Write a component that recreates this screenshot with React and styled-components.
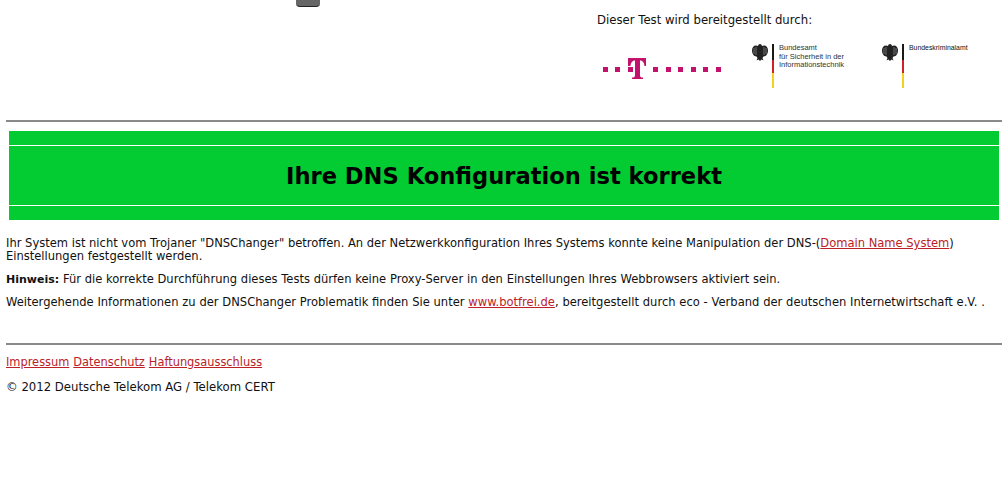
import React from 'react';
import styled, { createGlobalStyle } from 'styled-components';

const GlobalStyle = createGlobalStyle`
  html, body {
    margin: 0;
    padding: 0;
    background: #fff;
  }
  body {
    font-family: "DejaVu Sans", Verdana, sans-serif;
    font-size: 11.7px;
    line-height: 13px;
    color: #111;
  }
`;

const Page = styled.div`
  position: relative;
  padding: 14px 6px 0;
  height: 490px;
`;

const DragHandle = styled.div`
  position: absolute;
  top: 0;
  left: 296px;
  width: 24px;
  height: 6px;
  background: #666;
  border-bottom: 1px solid #222;
  border-radius: 0 0 4px 4px;
`;

const Header = styled.header`
  display: flex;
  justify-content: flex-end;
  height: 106px;
`;

const Sponsors = styled.div`
  width: 405px;
`;

const SponsorTitle = styled.div`
  margin-bottom: 17px;
`;

const LogoRow = styled.div`
  display: flex;
  align-items: flex-start;
`;

const TelekomLogo = styled.svg`
  display: block;
  flex: none;
  width: 125px;
  height: 35px;
  margin: 11px 25px 0 5px;
`;

const AgencyLogo = styled.div`
  display: flex;
  align-items: flex-start;
  flex: none;
  width: ${props => props.width}px;
`;

const Eagle = styled.svg`
  display: block;
  width: 16px;
  height: 17px;
  flex: none;
`;

const FlagBar = styled.div`
  width: 2px;
  height: 44px;
  flex: none;
  margin: 0 5px 0 4px;
  background: linear-gradient(#1a1a1a 0 36%, #d0202a 36% 66%, #f2d21e 66% 100%);
`;

const AgencyName = styled.div`
  font-family: "Liberation Sans", Arial, sans-serif;
  font-size: ${props => props.size}px;
  line-height: 8.5px;
  color: ${props => props.color};
  white-space: nowrap;
`;

const Rule = styled.hr`
  border: 0;
  height: 2px;
  margin: 0;
  background: #8a8a8a;
`;

const Banner = styled.div`
  margin: 9px 3px 0;
  height: 89px;
  background: #03cc33;
  display: flex;
  flex-direction: column;
`;

const BannerStrip = styled.div`
  height: 14px;
  flex: none;
  border-${props => props.side}: 1px solid #fff;
`;

const BannerTitle = styled.h1`
  flex: 1;
  margin: 0;
  padding-top: 1px;
  display: flex;
  align-items: center;
  justify-content: center;
  font-size: 22.6px;
  font-weight: 700;
  color: #000;
`;

const Body = styled.div`
  padding-top: 17px;
  font-size: 11.53px;
`;

const Text = styled.p`
  margin: 0 0 ${props => props.gap}px;
  line-height: 13px;
  white-space: nowrap;
  word-spacing: ${props => props.spread || 0}px;
`;

const Note = styled.strong`
  font-size: 11px;
`;

const Link = styled.a`
  color: #bb2127;
  text-decoration: underline;
`;

const FooterRule = styled(Rule)`
  margin-top: 34px;
`;

const FooterLinks = styled.div`
  display: flex;
  gap: 4px;
  margin: 11px 0 12px;
  font-size: 11.4px;
`;

function AgencyEagle() {
  return (
    <Eagle viewBox="0 0 16 17">
      <path
        fill="#222"
        d="M8 0C9 0 9.800.7 10 2L12 1.500C14.500 1.500 16 3.500 16 6.500 16 9 15 11 13.500 12L11.500 12.500 10.500 14 11.500 16.500 9.500 15.500 8 17 6.500 15.500 4.500 16.500 5.500 14 4.500 12.500 2.500 12C1 11 0 9 0 6.500 0 3.500 1.500 1.500 4 1.500L6 2C6.200.7 7 0 8 0Z"
      />
      <path stroke="#aaa" strokeWidth=".6" d="M2 4v6M4 3v8M12 3v8M14 4v6" />
    </Eagle>
  );
}

const App = () => (
  <Page>
    <GlobalStyle />
    <DragHandle />
    <Header>
      <Sponsors>
        <SponsorTitle>Dieser Test wird bereitgestellt durch:</SponsorTitle>
        <LogoRow>
          <TelekomLogo viewBox="0 0 125 35">
            <g fill="#c2126d">
              <rect x="1" y="12" width="5" height="5" />
              <rect x="13" y="12" width="5" height="5" />
              <rect x="26" y="12" width="5" height="5" />
              <path d="M26 3h18v8h-1.500c-.3-3-1.500-5.500-4.500-5.500v14.500c0 2 .7 2.500 3 2.500v1.500h-11v-1.500c2.300 0 3-.5 3-2.500V5.500c-3 0-4.200 2.500-4.500 5.500H26z" />
              <rect x="51" y="12" width="5" height="5" />
              <rect x="64" y="12" width="5" height="5" />
              <rect x="76" y="12" width="5" height="5" />
              <rect x="89" y="12" width="5" height="5" />
              <rect x="101" y="12" width="5" height="5" />
              <rect x="114" y="12" width="5" height="5" />
            </g>
          </TelekomLogo>
          <AgencyLogo width={130}>
            <AgencyEagle />
            <FlagBar />
            <AgencyName size={7.5} color="#333">
              Bundesamt
              <br />
              für Sicherheit in der
              <br />
              Informationstechnik
            </AgencyName>
          </AgencyLogo>
          <AgencyLogo width={100}>
            <AgencyEagle />
            <FlagBar />
            <AgencyName size={6.9} color="#111">Bundeskriminalamt</AgencyName>
          </AgencyLogo>
        </LogoRow>
      </Sponsors>
    </Header>
    <Rule />
    <Banner>
      <BannerStrip side="bottom" />
      <BannerTitle>Ihre DNS Konfiguration ist korrekt</BannerTitle>
      <BannerStrip side="top" />
    </Banner>
    <Body>
      <Text gap={10}>
        Ihr System ist nicht vom Trojaner "DNSChanger" betroffen. An der Netzwerkkonfiguration Ihres Systems konnte keine Manipulation der DNS-(<Link href="#">Domain Name System</Link>)
        <br />
        Einstellungen festgestellt werden.
      </Text>
      <Text gap={10} spread={0.1}>
        <Note>Hinweis:</Note> Für die korrekte Durchführung dieses Tests dürfen keine Proxy-Server in den Einstellungen Ihres Webbrowsers aktiviert sein.
      </Text>
      <Text gap={11} spread={0.15}>
        Weitergehende Informationen zu der DNSChanger Problematik finden Sie unter <Link href="#">www.botfrei.de</Link>, bereitgestellt durch eco - Verband der deutschen Internetwirtschaft e.V. .
      </Text>
    </Body>
    <FooterRule />
    <FooterLinks>
      <Link href="#">Impressum</Link>
      <Link href="#">Datenschutz</Link>
      <Link href="#">Haftungsausschluss</Link>
    </FooterLinks>
    <Text gap={0}>© 2012 Deutsche Telekom AG / Telekom CERT</Text>
  </Page>
);

export default App;
